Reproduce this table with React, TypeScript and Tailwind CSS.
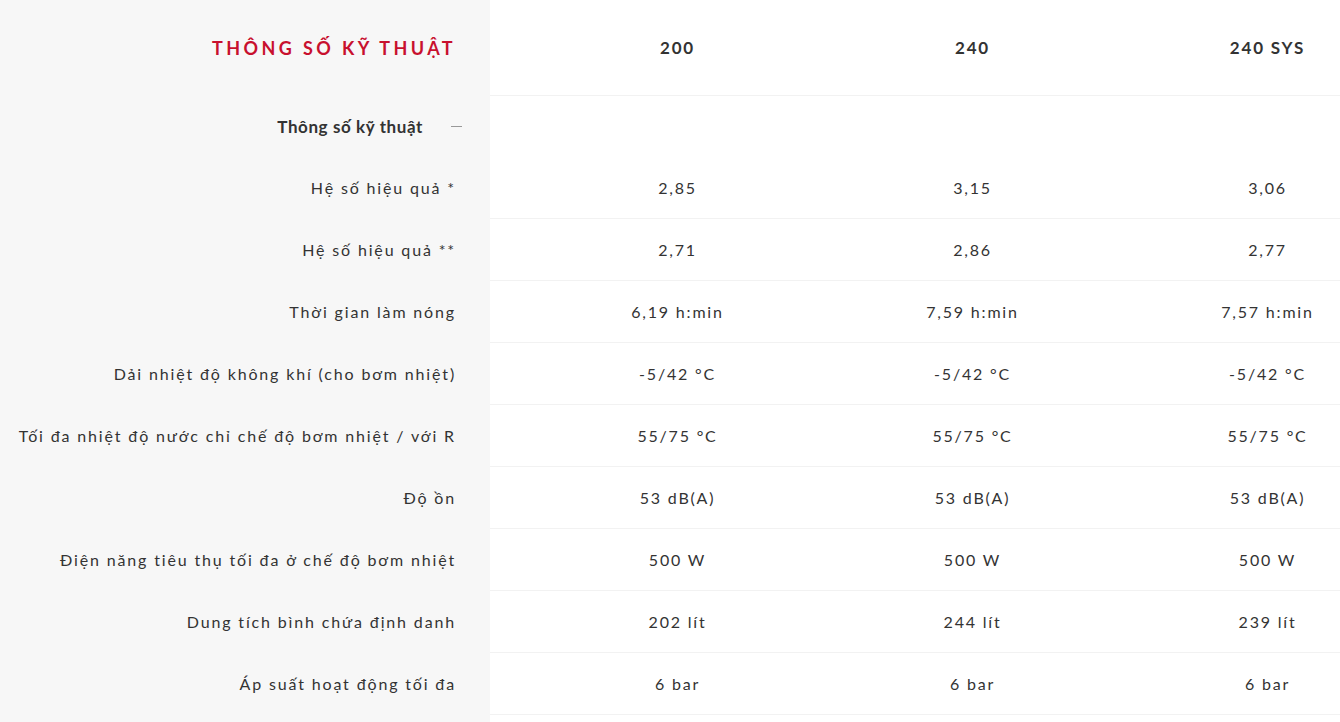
import React from "react";

const rows: [string, string, string, string][] = [
  ["Hệ số hiệu quả *", "2,85", "3,15", "3,06"],
  ["Hệ số hiệu quả **", "2,71", "2,86", "2,77"],
  ["Thời gian làm nóng", "6,19 h:min", "7,59 h:min", "7,57 h:min"],
  ["Dải nhiệt độ không khí (cho bơm nhiệt)", "-5/42 °C", "-5/42 °C", "-5/42 °C"],
  ["Tối đa nhiệt độ nước chỉ chế độ bơm nhiệt / với R", "55/75 °C", "55/75 °C", "55/75 °C"],
  ["Độ ồn", "53 dB(A)", "53 dB(A)", "53 dB(A)"],
  ["Điện năng tiêu thụ tối đa ở chế độ bơm nhiệt", "500 W", "500 W", "500 W"],
  ["Dung tích bình chứa định danh", "202 lít", "244 lít", "239 lít"],
  ["Áp suất hoạt động tối đa", "6 bar", "6 bar", "6 bar"],
];

export default function App() {
  return (
    <div
      className="w-[1340px] h-[722px] overflow-hidden bg-white text-[#333]"
      style={{ fontFamily: "Lato, 'Open Sans', sans-serif" }}
    >
      {/* header */}
      <div className="flex h-[96px]">
        <div className="w-[490px] shrink-0 bg-[#f7f7f7] flex items-center justify-end pr-[34px]">
          <span className="text-[18px] font-bold tracking-[3.4px] text-[#c8102e]">THÔNG SỐ KỸ THUẬT</span>
        </div>
        <div className="flex-1 flex pl-[40px] border-b border-[#f2f2f2] min-w-0">
          {["200", "240", "240 SYS"].map((h) => (
            <div key={h} className="w-[295px] shrink-0 flex items-center justify-center text-[17px] font-bold tracking-[1.8px] text-[#333]">
              {h}
            </div>
          ))}
        </div>
      </div>
      {/* section row */}
      <div className="flex h-[61px]">
        <div className="w-[490px] shrink-0 bg-[#f7f7f7] flex items-center justify-end pr-[28px] gap-[28px]">
          <span className="text-[17px] font-bold tracking-[0.6px] text-[#333]">Thông số kỹ thuật</span>
          <span className="block w-[11px] h-[1.5px] bg-[#999]" />
        </div>
        <div className="flex-1" />
      </div>
      {rows.map((r) => (
        <div key={r[0]} className="flex h-[62px]">
          <div className="w-[490px] shrink-0 bg-[#f7f7f7] flex items-center justify-end pr-[34px]">
            <span className="text-[16px] tracking-[1.85px] text-[#333] whitespace-nowrap">{r[0]}</span>
          </div>
          <div className="flex-1 flex pl-[40px] border-b border-[#f2f2f2] min-w-0">
            {r.slice(1).map((v, i) => (
              <div key={i} className="w-[295px] shrink-0 flex items-center justify-center text-[16px] tracking-[1.8px] text-[#333] whitespace-nowrap">
                {v}
              </div>
            ))}
          </div>
        </div>
      ))}
      <div className="flex h-[20px]">
        <div className="w-[490px] shrink-0 bg-[#f7f7f7]" />
      </div>
    </div>
  );
}
